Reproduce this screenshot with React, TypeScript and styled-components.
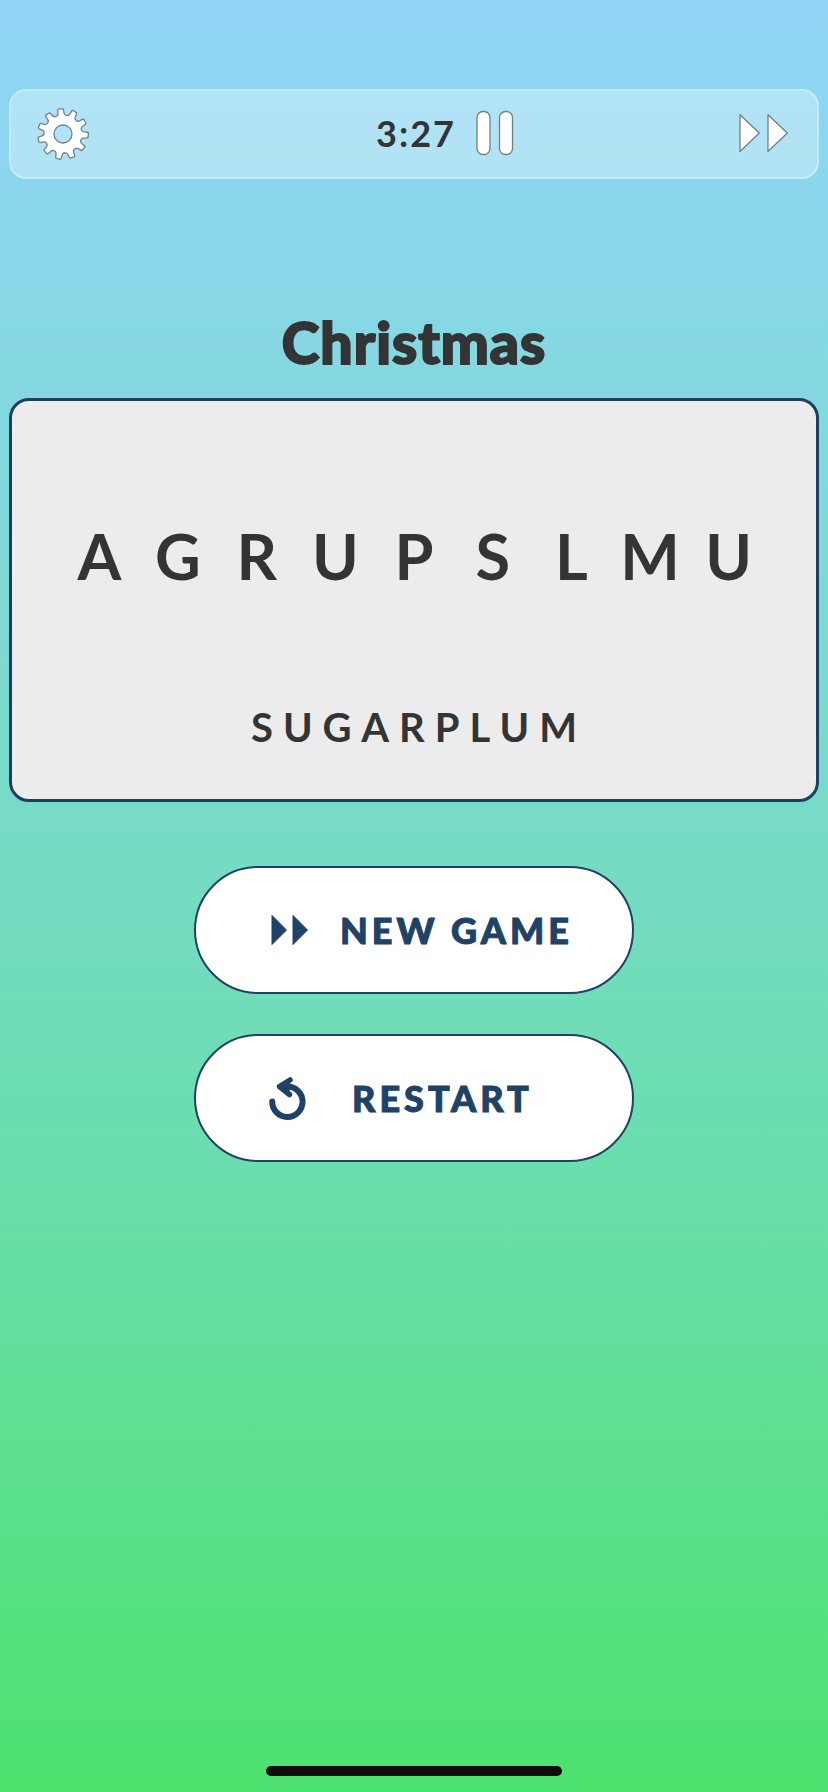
import React from "react";
import styled, { createGlobalStyle } from "styled-components";

const ink = "#333435";
const navy = "#204266";

const GlobalStyle = createGlobalStyle`
  * { box-sizing: border-box; }
  body {
    margin: 0;
    font-family: Lato, "Open Sans", sans-serif;
    color: ${ink};
  }
`;

const Screen = styled.div`
  min-height: 100vh;
  padding: 89px 9px 16px;
  display: flex;
  flex-direction: column;
  background: linear-gradient(
    180deg,
    #91d5f8 0%,
    #82d8dc 26%,
    #76dbc5 47%,
    #6adead 65%,
    #4de16e 100%
  );
`;

const TopBar = styled.header`
  display: grid;
  grid-template-columns: 1fr auto 1fr;
  align-items: center;
  height: 90px;
  padding: 0 28px 0 26px;
  border: 2px solid #c3ecfb;
  border-radius: 17px;
  background: rgba(255, 255, 255, 0.32);
`;

const IconButton = styled.button<{ $align?: string }>`
  display: flex;
  justify-self: ${(p) => p.$align ?? "start"};
  padding: 0;
  border: 0;
  background: none;
  cursor: pointer;
`;

const Clock = styled.div`
  display: flex;
  align-items: center;
  gap: 20px;
  padding: 0 0 2px 64px;
`;

const Time = styled.time`
  font-size: 36px;
  line-height: 44px;
  font-weight: 700;
  letter-spacing: 2px;
`;

const Main = styled.main`
  flex: 1;
  display: flex;
  flex-direction: column;
  align-items: center;
  padding-top: 129px;
`;

const Category = styled.h1`
  margin: 0 0 22px;
  font-size: 57px;
  line-height: 68px;
  font-weight: 900;
  letter-spacing: 1px;
  -webkit-text-stroke: 2px ${ink};
`;

const Board = styled.section`
  width: 100%;
  height: 404px;
  display: flex;
  flex-direction: column;
  align-items: center;
  padding: 117px 48px 0;
  border: 3px solid #1d3f63;
  border-radius: 20px;
  background: #ececec;
`;

const Letters = styled.div`
  width: 100%;
  display: grid;
  grid-template-columns: repeat(9, 1fr);
  font-size: 63px;
  line-height: 76px;
  font-weight: 700;
  text-align: center;
`;

const Answer = styled.p`
  margin: 109px 0 0;
  padding-left: 10px;
  font-size: 40px;
  line-height: 48px;
  font-weight: 700;
  letter-spacing: 10px;
`;

const Actions = styled.div`
  width: 440px;
  max-width: 100%;
  display: flex;
  flex-direction: column;
  gap: 40px;
  margin-top: 64px;
`;

const ActionButton = styled.button<{ $gap: number }>`
  display: flex;
  align-items: center;
  gap: ${(p) => p.$gap}px;
  height: 128px;
  padding: 0 0 0 73px;
  border: 2px solid ${navy};
  border-radius: 64px;
  background: #fff;
  color: ${navy};
  font: 900 36px/44px Lato, "Open Sans", sans-serif;
  letter-spacing: 4px;
  -webkit-text-stroke: 1px ${navy};
  cursor: pointer;
`;

const HomeIndicator = styled.div`
  align-self: center;
  width: 296px;
  height: 10px;
  border-radius: 5px;
  background: #0b0c0b;
`;

const outline = { fill: "#fff", stroke: "#6f8189", strokeWidth: 1.3, strokeLinejoin: "round" as const };

// Each tooth is given by polar points (radius, offset in degrees) round its own axis.
const gearPath = (() => {
  const teeth = 11;
  const at = (r: number, deg: number) => {
    const a = (deg * Math.PI) / 180;
    return `${(26 + r * Math.cos(a)).toFixed(2)} ${(26 + r * Math.sin(a)).toFixed(2)}`;
  };
  let d = "";
  for (let i = 0; i < teeth; i++) {
    const c = -95.5 + (i * 360) / teeth;
    d += `${i ? "L" : "M"}${at(21, c - 8.5)}L${at(24.4, c - 6.8)}Q${at(25.4, c - 6)} ${at(25.5, c - 4)}`;
    d += `L${at(25.2, c + 5)}Q${at(25, c + 6.5)} ${at(24, c + 6.8)}L${at(21, c + 8.5)}`;
    d += `Q${at(19.2, c + 10)} ${at(19, c + 14)}L${at(19, c + 19)}Q${at(19.2, c + 22.7)} ${at(21, c + 24.2)}`;
  }
  return d + "ZM17 26a9 9 0 1 0 18 0a9 9 0 1 0 -18 0Z";
})();

const GearIcon = () => (
  <svg width="52" height="52" viewBox="0 0 52 52" aria-hidden="true">
    <path d={gearPath} fillRule="evenodd" {...outline} />
  </svg>
);

const PauseIcon = () => (
  <svg width="38" height="46" viewBox="0 0 38 46" aria-hidden="true">
    <rect x="1" y="1.5" width="13" height="43" rx="6" {...outline} />
    <rect x="23.5" y="1.5" width="13" height="43" rx="6" {...outline} />
  </svg>
);

const SkipIcon = () => (
  <svg width="50" height="40" viewBox="0 0 50 40" aria-hidden="true">
    <path d="M1 0.700L20.300 19L1 37.500ZM29 0.700L48.300 19L29 37.500Z" {...outline} />
  </svg>
);

const ForwardIcon = () => (
  <svg width="40" height="32" viewBox="0 0 40 32" aria-hidden="true">
    <path
      d="M3 1.500L17.500 16L3 30.500ZM24 1.500L38.500 16L24 30.500Z"
      fill={navy}
      stroke={navy}
      strokeLinejoin="round"
    />
  </svg>
);

const RestartIcon = () => (
  <svg width="38" height="44" viewBox="0 0 38 44" aria-hidden="true">
    <g fill="none" stroke={navy} strokeWidth="6" strokeLinecap="round" strokeLinejoin="round">
      <path d="M3.200 25.500A15.200 15.200 0 1 0 18.500 10.500" />
      <path d="M21 4L10.500 10.500L20.500 18.500" fill={navy} strokeWidth="5.500" />
      <path d="M13 11L19 11.500" />
    </g>
  </svg>
);

export default function App() {
  return (
    <>
      <GlobalStyle />
      <Screen>
        <TopBar>
          <IconButton aria-label="Settings">
            <GearIcon />
          </IconButton>
          <Clock>
            <Time>3:27</Time>
            <IconButton aria-label="Pause">
              <PauseIcon />
            </IconButton>
          </Clock>
          <IconButton aria-label="Skip" $align="end">
            <SkipIcon />
          </IconButton>
        </TopBar>
        <Main>
          <Category>Christmas</Category>
          <Board>
            <Letters>
              {"AGRUPSLMU".split("").map((letter, i) => (
                <span key={i}>{letter}</span>
              ))}
            </Letters>
            <Answer>SUGARPLUM</Answer>
          </Board>
          <Actions>
            <ActionButton $gap={31}>
              <ForwardIcon />
              <span>NEW GAME</span>
            </ActionButton>
            <ActionButton $gap={45}>
              <RestartIcon />
              <span>RESTART</span>
            </ActionButton>
          </Actions>
        </Main>
        <HomeIndicator />
      </Screen>
    </>
  );
}
